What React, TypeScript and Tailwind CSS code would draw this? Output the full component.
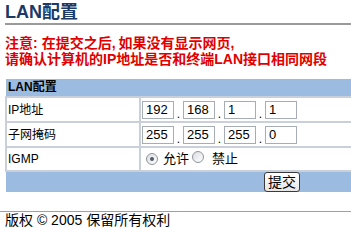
import { useState } from 'react'

const ipFields = [
  { label: 'IP地址', values: ['192', '168', '1', '1'] },
  { label: '子网掩码', values: ['255', '255', '255', '0'] },
]

function Radio({ checked, onClick }: { checked: boolean; onClick: () => void }) {
  return (
    <span
      onClick={onClick}
      className="inline-flex h-[12px] w-[12px] cursor-pointer items-center justify-center rounded-full border border-[#8f969e] bg-gradient-to-br from-[#d9dde2] to-white"
    >
      {checked && <span className="h-[4px] w-[4px] rounded-full bg-[#555b62]" />}
    </span>
  )
}

export default function App() {
  const [igmp, setIgmp] = useState(true)

  return (
    <div className="h-[228px] w-[351px] overflow-hidden bg-white font-['Liberation_Sans','Noto_Sans_CJK_SC',sans-serif] text-black">
      <div className="pl-[5px] pt-[2px]">
        <h1 className="text-[18px] font-bold leading-[20px] text-[#1b3a66]">LAN配置</h1>
        <div className="mt-[1px] h-[2px] bg-[#9a9a9a]" />

        <p className="mt-[10px] whitespace-nowrap text-[14px] font-bold leading-[16px] text-[#e00000]">
          注意<span className="mr-[4px]">:</span>在提交之后<span className="mr-[3px]">,</span>如果没有显示网页<span className="mr-[3px]">,</span>
          <br />
          请确认计算机的IP地址是否和终端LAN接口相同网段
        </p>

        <table className="mt-[12px] w-[420px] border-collapse text-[12px]">
          <tbody>
            <tr>
              <td colSpan={2} className="h-[17px] bg-[#9bbce0] px-[2px] font-bold leading-[17px]">
                LAN配置
              </td>
            </tr>
            {ipFields.map((f) => (
              <tr key={f.label}>
                <td className="h-[25px] w-[134px] border-2 border-[#c9d0d9] px-[1px]">{f.label}</td>
                <td className="border-2 border-[#c9d0d9] pl-[1px]">
                  <div className="flex items-end">
                    {f.values.map((v, i) => (
                      <div key={i} className="flex items-end">
                        {i > 0 && <span className="w-[9px] text-center leading-[10px]">.</span>}
                        <span className="flex h-[18px] w-[32px] items-center border border-[#a6adb6] px-[3px] font-['Liberation_Sans',sans-serif] text-[13px]">
                          {v}
                        </span>
                      </div>
                    ))}
                  </div>
                </td>
              </tr>
            ))}
            <tr>
              <td className="h-[24px] border-2 border-[#c9d0d9] px-[1px]">IGMP</td>
              <td className="border-2 border-[#c9d0d9] pl-[5px]">
                <div className="flex items-center text-[13px]">
                  <Radio checked={igmp} onClick={() => setIgmp(true)} />
                  <span className="ml-[5px]">允许</span>
                  <span className="ml-[3px]">
                    <Radio checked={!igmp} onClick={() => setIgmp(false)} />
                  </span>
                  <span className="ml-[8px]">禁止</span>
                </div>
              </td>
            </tr>
            <tr>
              <td className="h-[21px] bg-[#9bbce0]" />
              <td className="bg-[#9bbce0] text-center">
                <button className="h-[20px] w-[36px] rounded-[3px] border border-[#3a3a3a] bg-gradient-to-b from-white to-[#e6e6e6] text-[14px] leading-[16px]">
                  提交
                </button>
              </td>
            </tr>
          </tbody>
        </table>
      </div>

      <div className="mt-[19px] h-px bg-[#a0a0a0]" />
      <div className="pl-[5px] pt-[1px] text-[14px] leading-[14px]">版权 © 2005 保留所有权利</div>
    </div>
  )
}
